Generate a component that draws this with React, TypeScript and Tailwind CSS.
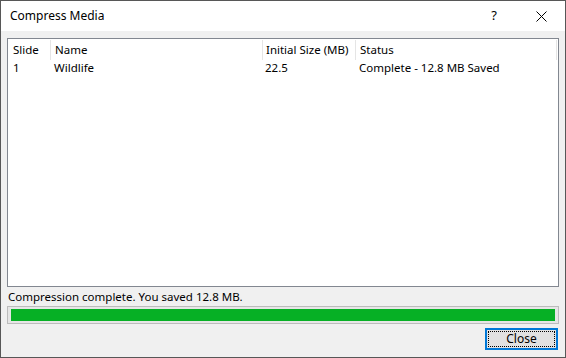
export default function App() {
  const font = { fontFamily: '"Noto Sans", "Open Sans", sans-serif' };
  return (
    <div
      className="w-[566px] h-[358px] border border-[#575757] bg-[#f0f0f0] flex flex-col text-[11.5px] text-black overflow-hidden"
      style={font}
    >
      {/* Title bar */}
      <div className="h-[30px] bg-white flex items-center shrink-0">
        <span className="pl-[9px] flex-1 leading-none text-[12px]">Compress Media</span>
        <span className="w-[12px] text-center text-[13px] mr-[36px]">?</span>
        <svg width="11" height="11" viewBox="0 0 11 11" className="mr-[18px]">
          <path d="M0.5 0.5 L10.5 10.5 M10.5 0.5 L0.5 10.5" stroke="#000" strokeWidth="1" />
        </svg>
      </div>

      {/* Body */}
      <div className="flex-1 flex flex-col px-[6px] pt-[7px]">
        <div className="h-[249px] border border-[#828790] bg-white">
          <div className="flex h-[21px] pt-[1px]">
            <div className="w-[43px] pl-[5px] border-r border-[#e5e5e5] flex items-center">Slide</div>
            <div className="w-[212px] pl-[4px] border-r border-[#e5e5e5] flex items-center">Name</div>
            <div className="w-[93px] pl-[3px] border-r border-[#e5e5e5] flex items-center">Initial Size (MB)</div>
            <div className="w-[201px] pl-[4px] border-r border-[#e5e5e5] flex items-center">Status</div>
          </div>
          <div className="flex h-[16px] items-center">
            <div className="w-[43px] pl-[5px]">1</div>
            <div className="w-[212px] pl-[3px]">Wildlife</div>
            <div className="w-[93px] pl-[2px]">22.5</div>
            <div className="w-[201px] pl-[3px]">Complete - 12.8 MB Saved</div>
          </div>
        </div>

        <div className="h-[19px] flex items-center pl-[1px]">Compression complete. You saved 12.8 MB.</div>

        <div className="h-[18px] border border-[#bcbcbc] bg-[#e6e6e6] px-[3px] py-[2px]">
          <div className="h-full bg-[#06b025]" />
        </div>

        <div className="flex justify-end pt-[4px] pr-[1px]">
          <button className="w-[73px] h-[22px] border-2 border-[#0078d7] bg-[#e1e1e1] p-[1px]">
            <div className="w-full h-full border border-dotted border-black flex items-center justify-center leading-none text-[12px]">
              Close
            </div>
          </button>
        </div>
      </div>
    </div>
  );
}
